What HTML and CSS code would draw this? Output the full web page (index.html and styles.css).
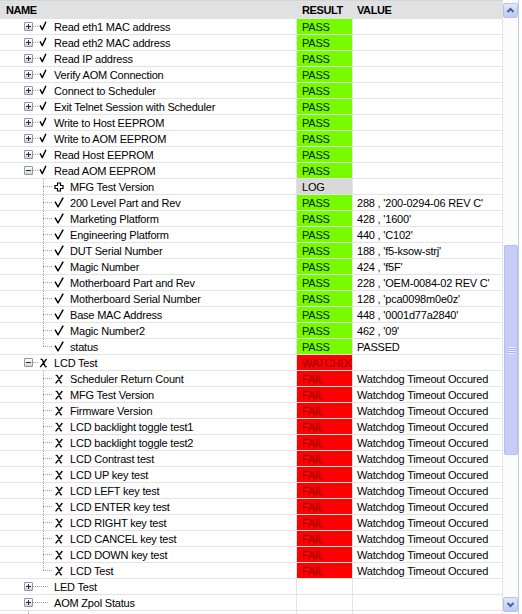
FILE: index.html
```html
<!DOCTYPE html>
<html>
<head>
<meta charset="utf-8">
<link rel="stylesheet" href="styles.css">
</head>
<body>
<svg class="defs" xmlns="http://www.w3.org/2000/svg">
  <symbol id="rchk" viewBox="0 0 15 15"><path d="M1 6.3 L3.3 10.6 L6.9 2.7" fill="none" stroke="#000" stroke-width="1.4" stroke-linejoin="round"/></symbol>
  <symbol id="cchk" viewBox="0 0 17 15"><path d="M2 6.6 L5 11.8 L10.2 2.7" fill="none" stroke="#000" stroke-width="1.4" stroke-linejoin="round"/></symbol>
  <symbol id="rx" viewBox="0 0 15 15"><path d="M1.6 4.6 Q2.6 3.4 3.4 5 L6 11 Q6.6 12.4 7.6 11.4 M7.6 4 L1.2 12.2" fill="none" stroke="#000" stroke-width="1.3"/></symbol>
  <symbol id="cx" viewBox="0 0 17 15"><path d="M2.8 4.8 Q3.8 3.6 4.6 5.2 L7.4 11 Q8 12.4 9 11.4 M9.4 4 L2.6 12.3" fill="none" stroke="#000" stroke-width="1.3"/></symbol>
  <symbol id="clog" viewBox="0 0 17 15"><path d="M4.5 4 H7.5 V6.5 H10 V9.5 H7.5 V12 H4.5 V9.5 H2 V6.5 H4.5 Z" fill="#fff" stroke="#000" stroke-width="1.2"/></symbol>
  <symbol id="up" viewBox="0 0 13 13"><path d="M3.5 8 L6.5 5 L9.5 8" fill="none" stroke="#4d6185" stroke-width="2"/></symbol>
  <symbol id="down" viewBox="0 0 13 13"><path d="M3.5 5 L6.5 8 L9.5 5" fill="none" stroke="#4d6185" stroke-width="2"/></symbol>
</svg>
<div class="frame">
  <div class="grid">
    <div class="head">
      <div class="h-name">NAME</div>
      <div class="h-res">RESULT</div>
      <div class="h-val">VALUE</div>
    </div>

    <div class="row"><div class="name"><span class="exp plus"></span><span class="dash"></span><svg class="ico r"><use href="#rchk"/></svg><span class="lbl">Read eth1 MAC address</span></div><div class="res pass">PASS</div><div class="val"></div></div>
    <div class="row"><div class="name"><span class="exp plus"></span><span class="dash"></span><svg class="ico r"><use href="#rchk"/></svg><span class="lbl">Read eth2 MAC address</span></div><div class="res pass">PASS</div><div class="val"></div></div>
    <div class="row"><div class="name"><span class="exp plus"></span><span class="dash"></span><svg class="ico r"><use href="#rchk"/></svg><span class="lbl">Read IP address</span></div><div class="res pass">PASS</div><div class="val"></div></div>
    <div class="row"><div class="name"><span class="exp plus"></span><span class="dash"></span><svg class="ico r"><use href="#rchk"/></svg><span class="lbl">Verify AOM Connection</span></div><div class="res pass">PASS</div><div class="val"></div></div>
    <div class="row"><div class="name"><span class="exp plus"></span><span class="dash"></span><svg class="ico r"><use href="#rchk"/></svg><span class="lbl">Connect to Scheduler</span></div><div class="res pass">PASS</div><div class="val"></div></div>
    <div class="row"><div class="name"><span class="exp plus"></span><span class="dash"></span><svg class="ico r"><use href="#rchk"/></svg><span class="lbl">Exit Telnet Session with Scheduler</span></div><div class="res pass">PASS</div><div class="val"></div></div>
    <div class="row"><div class="name"><span class="exp plus"></span><span class="dash"></span><svg class="ico r"><use href="#rchk"/></svg><span class="lbl">Write to Host EEPROM</span></div><div class="res pass">PASS</div><div class="val"></div></div>
    <div class="row"><div class="name"><span class="exp plus"></span><span class="dash"></span><svg class="ico r"><use href="#rchk"/></svg><span class="lbl">Write to AOM EEPROM</span></div><div class="res pass">PASS</div><div class="val"></div></div>
    <div class="row"><div class="name"><span class="exp plus"></span><span class="dash"></span><svg class="ico r"><use href="#rchk"/></svg><span class="lbl">Read Host EEPROM</span></div><div class="res pass">PASS</div><div class="val"></div></div>
    <div class="row"><div class="name"><span class="exp minus"></span><span class="dash"></span><svg class="ico r"><use href="#rchk"/></svg><span class="lbl">Read AOM EEPROM</span></div><div class="res pass">PASS</div><div class="val"></div></div>

    <div class="row"><div class="name child"><span class="elbow"></span><svg class="ico c"><use href="#clog"/></svg><span class="lbl">MFG Test Version</span></div><div class="res log">LOG</div><div class="val"></div></div>
    <div class="row"><div class="name child"><span class="elbow"></span><svg class="ico c"><use href="#cchk"/></svg><span class="lbl">200 Level Part and Rev</span></div><div class="res pass">PASS</div><div class="val">288 , '200-0294-06 REV C'</div></div>
    <div class="row"><div class="name child"><span class="elbow"></span><svg class="ico c"><use href="#cchk"/></svg><span class="lbl">Marketing Platform</span></div><div class="res pass">PASS</div><div class="val">428 , '1600'</div></div>
    <div class="row"><div class="name child"><span class="elbow"></span><svg class="ico c"><use href="#cchk"/></svg><span class="lbl">Engineering Platform</span></div><div class="res pass">PASS</div><div class="val">440 , 'C102'</div></div>
    <div class="row"><div class="name child"><span class="elbow"></span><svg class="ico c"><use href="#cchk"/></svg><span class="lbl">DUT Serial Number</span></div><div class="res pass">PASS</div><div class="val">188 , 'f5-ksow-strj'</div></div>
    <div class="row"><div class="name child"><span class="elbow"></span><svg class="ico c"><use href="#cchk"/></svg><span class="lbl">Magic Number</span></div><div class="res pass">PASS</div><div class="val">424 , 'f5F'</div></div>
    <div class="row"><div class="name child"><span class="elbow"></span><svg class="ico c"><use href="#cchk"/></svg><span class="lbl">Motherboard Part and Rev</span></div><div class="res pass">PASS</div><div class="val">228 , 'OEM-0084-02 REV C'</div></div>
    <div class="row"><div class="name child"><span class="elbow"></span><svg class="ico c"><use href="#cchk"/></svg><span class="lbl">Motherboard Serial Number</span></div><div class="res pass">PASS</div><div class="val">128 , 'pca0098m0e0z'</div></div>
    <div class="row"><div class="name child"><span class="elbow"></span><svg class="ico c"><use href="#cchk"/></svg><span class="lbl">Base MAC Address</span></div><div class="res pass">PASS</div><div class="val">448 , '0001d77a2840'</div></div>
    <div class="row"><div class="name child"><span class="elbow"></span><svg class="ico c"><use href="#cchk"/></svg><span class="lbl">Magic Number2</span></div><div class="res pass">PASS</div><div class="val">462 , '09'</div></div>
    <div class="row"><div class="name child"><span class="elbow last"></span><svg class="ico c"><use href="#cchk"/></svg><span class="lbl">status</span></div><div class="res pass">PASS</div><div class="val">PASSED</div></div>

    <div class="row"><div class="name"><span class="exp minus"></span><span class="dash"></span><svg class="ico r"><use href="#rx"/></svg><span class="lbl">LCD Test</span></div><div class="res fail">WATCHDOG</div><div class="val"></div></div>

    <div class="row"><div class="name child"><span class="elbow"></span><svg class="ico c"><use href="#cx"/></svg><span class="lbl">Scheduler Return Count</span></div><div class="res fail">FAIL</div><div class="val">Watchdog Timeout Occured</div></div>
    <div class="row"><div class="name child"><span class="elbow"></span><svg class="ico c"><use href="#cx"/></svg><span class="lbl">MFG Test Version</span></div><div class="res fail">FAIL</div><div class="val">Watchdog Timeout Occured</div></div>
    <div class="row"><div class="name child"><span class="elbow"></span><svg class="ico c"><use href="#cx"/></svg><span class="lbl">Firmware Version</span></div><div class="res fail">FAIL</div><div class="val">Watchdog Timeout Occured</div></div>
    <div class="row"><div class="name child"><span class="elbow"></span><svg class="ico c"><use href="#cx"/></svg><span class="lbl">LCD backlight toggle test1</span></div><div class="res fail">FAIL</div><div class="val">Watchdog Timeout Occured</div></div>
    <div class="row"><div class="name child"><span class="elbow"></span><svg class="ico c"><use href="#cx"/></svg><span class="lbl">LCD backlight toggle test2</span></div><div class="res fail">FAIL</div><div class="val">Watchdog Timeout Occured</div></div>
    <div class="row"><div class="name child"><span class="elbow"></span><svg class="ico c"><use href="#cx"/></svg><span class="lbl">LCD Contrast test</span></div><div class="res fail">FAIL</div><div class="val">Watchdog Timeout Occured</div></div>
    <div class="row"><div class="name child"><span class="elbow"></span><svg class="ico c"><use href="#cx"/></svg><span class="lbl">LCD UP key test</span></div><div class="res fail">FAIL</div><div class="val">Watchdog Timeout Occured</div></div>
    <div class="row"><div class="name child"><span class="elbow"></span><svg class="ico c"><use href="#cx"/></svg><span class="lbl">LCD LEFT key test</span></div><div class="res fail">FAIL</div><div class="val">Watchdog Timeout Occured</div></div>
    <div class="row"><div class="name child"><span class="elbow"></span><svg class="ico c"><use href="#cx"/></svg><span class="lbl">LCD ENTER key test</span></div><div class="res fail">FAIL</div><div class="val">Watchdog Timeout Occured</div></div>
    <div class="row"><div class="name child"><span class="elbow"></span><svg class="ico c"><use href="#cx"/></svg><span class="lbl">LCD RIGHT key test</span></div><div class="res fail">FAIL</div><div class="val">Watchdog Timeout Occured</div></div>
    <div class="row"><div class="name child"><span class="elbow"></span><svg class="ico c"><use href="#cx"/></svg><span class="lbl">LCD CANCEL key test</span></div><div class="res fail">FAIL</div><div class="val">Watchdog Timeout Occured</div></div>
    <div class="row"><div class="name child"><span class="elbow"></span><svg class="ico c"><use href="#cx"/></svg><span class="lbl">LCD DOWN key test</span></div><div class="res fail">FAIL</div><div class="val">Watchdog Timeout Occured</div></div>
    <div class="row"><div class="name child"><span class="elbow last"></span><svg class="ico c"><use href="#cx"/></svg><span class="lbl">LCD Test</span></div><div class="res fail">FAIL</div><div class="val">Watchdog Timeout Occured</div></div>

    <div class="row"><div class="name"><span class="exp plus"></span><span class="dash long"></span><span class="lbl">LED Test</span></div><div class="res"></div><div class="val"></div></div>
    <div class="row"><div class="name"><span class="exp plus"></span><span class="dash long"></span><span class="lbl">AOM Zpol Status</span></div><div class="res"></div><div class="val"></div></div>
    <div class="row"><div class="name"><span class="stub"></span></div><div class="res"></div><div class="val"></div></div>
  </div>
  <div class="sb">
    <div class="track">
      <div class="btn up"><svg class="arrow"><use href="#up"/></svg></div>
      <div class="gap"></div>
      <div class="thumb"></div>
      <div class="fill"></div>
      <div class="btn down"><svg class="arrow"><use href="#down"/></svg></div>
    </div>
    <div class="edge"></div>
    <div class="rest"></div>
  </div>
</div>
</body>
</html>
```

FILE: styles.css
```css
* { box-sizing: border-box; }
html, body { margin: 0; padding: 0; background: #fff; }
body {
  font-family: "Liberation Sans", Arial, sans-serif;
  font-size: 11px;
  letter-spacing: -0.2px;
  color: #000;
}
.defs { display: none; }

.frame {
  width: 522px;
  height: 614px;
  display: flex;
  overflow: hidden;
}

.grid {
  width: 503px;
  flex: none;
  display: flex;
  flex-direction: column;
  overflow: hidden;
}

.head {
  flex: none;
  display: flex;
  height: 19px;
  background: #e1e1e1;
  border-top: 1px solid #d2d6de;
  font-weight: bold;
  letter-spacing: -0.4px;
  color: #000;
}
.head > div { display: flex; align-items: center; }
.h-name { width: 297px; padding-left: 6px; }
.h-res { width: 56px; padding-left: 5px; }
.h-val { flex: 1; padding-left: 4px; }

.row {
  flex: none;
  display: flex;
  height: 16px;
  border-bottom: 1px solid #e3e3e3;
}

.name {
  width: 297px;
  flex: none;
  display: flex;
  align-items: center;
  padding-left: 24px;
  border-right: 1px solid #e3e3e3;
  white-space: nowrap;
  overflow: hidden;
}
.name.child { padding-left: 43px; }

.exp {
  flex: none;
  width: 9px;
  height: 9px;
  border: 1px solid #8b97a8;
  border-radius: 1px;
}
.exp.plus {
  background:
    linear-gradient(#1d2a52, #1d2a52) center / 5px 1px no-repeat,
    linear-gradient(#1d2a52, #1d2a52) center / 1px 5px no-repeat,
    linear-gradient(#ffffff, #d6d4ca);
}
.exp.minus {
  background:
    linear-gradient(#1d2a52, #1d2a52) center / 5px 1px no-repeat,
    linear-gradient(#ffffff, #d6d4ca);
}

.dash {
  flex: none;
  align-self: stretch;
  width: 6px;
  background: repeating-linear-gradient(to right, #a3a3a3 0 1px, transparent 1px 2px) left center / 100% 1px no-repeat;
}
.dash.long { width: 15px; margin-right: 6px; }

.stub {
  flex: none;
  align-self: stretch;
  width: 1px;
  margin-left: 4px;
  background: repeating-linear-gradient(to bottom, #a3a3a3 0 1px, transparent 1px 2px);
}

.elbow {
  flex: none;
  align-self: stretch;
  width: 10px;
  background:
    repeating-linear-gradient(to bottom, #a3a3a3 0 1px, transparent 1px 2px) left top / 1px 100% no-repeat,
    repeating-linear-gradient(to right, #a3a3a3 0 1px, transparent 1px 2px) left 7px / 100% 1px no-repeat;
}
.elbow.last {
  background:
    repeating-linear-gradient(to bottom, #a3a3a3 0 1px, transparent 1px 2px) left top / 1px 8px no-repeat,
    repeating-linear-gradient(to right, #a3a3a3 0 1px, transparent 1px 2px) left 7px / 100% 1px no-repeat;
}

.ico { flex: none; height: 15px; }
.ico.r { width: 15px; }
.ico.c { width: 17px; }

.lbl { display: block; }

.res {
  width: 56px;
  flex: none;
  display: flex;
  align-items: center;
  padding-left: 5px;
  border-right: 1px solid #e3e3e3;
  white-space: nowrap;
  overflow: hidden;
}
.res.pass { background: #76fb00; color: #0d2600; }
.res.fail { background: #ff0000; color: #8e0000; }
.res.log { background: #d9d9d9; color: #000; }

.val {
  flex: 1;
  display: flex;
  align-items: center;
  padding-left: 4px;
  border-right: 1px solid #e3e3e3;
  white-space: nowrap;
  overflow: hidden;
}

/* scrollbar */
.sb { flex: none; width: 19px; display: flex; }
.track {
  width: 15px;
  display: flex;
  flex-direction: column;
  background: #fcfcfd;
}
.edge { width: 1px; background: #c3cbe6; }
.rest { width: 3px; background: #fff; }

.btn {
  flex: none;
  height: 15px;
  width: 15px;
  display: flex;
  align-items: center;
  justify-content: center;
  background: linear-gradient(#dfe7fd, #bccbf5);
  border: 1px solid #b3c1ec;
  border-radius: 2px;
}
.btn.up { margin-top: 3px; }
.btn.down { margin-bottom: 2px; }
.arrow { width: 13px; height: 13px; }

.gap { flex: none; height: 227px; }
.thumb {
  flex: none;
  height: 210px;
  margin-left: 1px;
  width: 14px;
  border: 1px solid #b6bdf0;
  border-radius: 2px;
  background:
    repeating-linear-gradient(to bottom, #eef0fe 0 1px, #a9b1ea 1px 2px) center / 7px 7px no-repeat,
    #c7ccf7;
}
.fill { flex: 1; }
```
